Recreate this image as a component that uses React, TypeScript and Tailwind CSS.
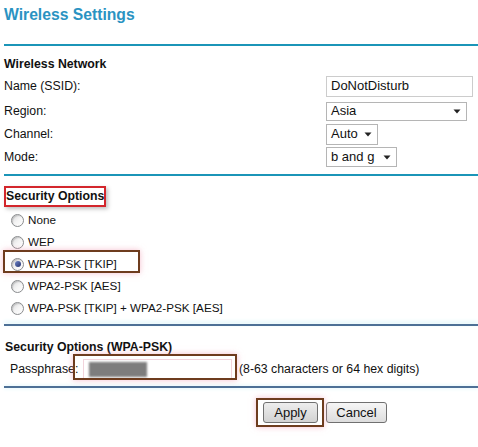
import React from "react";

function Radio({ checked }: { checked?: boolean }) {
  return (
    <span className="relative inline-flex h-[13px] w-[13px] shrink-0 items-center justify-center rounded-full border border-[#8a8c8e] bg-gradient-to-br from-[#d8d9da] via-[#f4f4f4] to-white shadow-[inset_1px_1px_1px_rgba(0,0,0,0.15)]">
      {checked && (
        <span className="h-[6px] w-[6px] rounded-full bg-gradient-to-br from-[#6f85c8] to-[#26346e]" />
      )}
    </span>
  );
}

function Arrow() {
  return (
    <svg width="8" height="5" viewBox="0 0 8 5" className="shrink-0">
      <path d="M0.5 0.5 L7.5 0.5 L4 4.5 Z" fill="#222" />
    </svg>
  );
}

function Select({ value, w, h }: { value: string; w: string; h: string }) {
  return (
    <div
      className={`${w} ${h} flex items-center justify-between border border-[#b5b5b5] bg-white pl-[4px] pr-[5px] text-[13px] text-[#111]`}
    >
      <span>{value}</span>
      <Arrow />
    </div>
  );
}

function Row({ label, children, className = "" }: { label: string; children: React.ReactNode; className?: string }) {
  return (
    <div className={`grid grid-cols-[326px_1fr] items-center h-[22px] ${className}`}>
      <span className="pl-[4px]">{label}</span>
      <div className="flex items-center">{children}</div>
    </div>
  );
}

function RadioRow({ label, checked, children }: { label: string; checked?: boolean; children?: React.ReactNode }) {
  return (
    <div className="relative flex h-[22px] items-center gap-[4px] pl-[11px] text-[11.7px]">
      <Radio checked={checked} />
      <span>{label}</span>
      {children}
    </div>
  );
}

export default function App() {
  return (
    <div className="relative h-[447px] w-[478px] overflow-hidden bg-white font-['Liberation_Sans',Arial,sans-serif] text-[12.3px] text-[#111]">
      <div className="h-[44px] pl-[4px] pt-[5px] text-[15.7px] font-bold leading-[20px] text-[#2a93c2]">
        Wireless Settings
      </div>
      <div className="ml-[4px] h-[2px] bg-[#1b95b8]" />

      <div className="mt-[8px] flex h-[21px] items-center pl-[4px] font-bold">Wireless Network</div>
      <Row label="Name (SSID):">
        <div className="flex h-[21px] w-[147px] items-center border border-[#cccccc] bg-white pl-[4px] text-[13px]">
          DoNotDisturb
        </div>
      </Row>
      <Row label="Region:" className="mt-[3px]">
        <Select value="Asia" w="w-[141px]" h="h-[19px]" />
      </Row>
      <Row label="Channel:" className="mt-[1px]">
        <Select value="Auto" w="w-[52px]" h="h-[21px]" />
      </Row>
      <Row label="Mode:" className="mt-[1px]">
        <Select value="b and g" w="w-[71px]" h="h-[20px]" />
      </Row>

      <div className="ml-[4px] mt-[6px] h-[2px] bg-[#1b95b8]" />

      <div className="relative mt-[9px] flex h-[22px] items-center pl-[6px] font-bold">
        Security Options
        <div className="absolute left-[4px] top-[1px] h-[21px] w-[102px] border-2 border-[#d3262c] shadow-[2px_2px_4px_rgba(0,0,0,0.25)]" />
      </div>

      <div className="mt-[2px]">
        <RadioRow label="None" />
        <RadioRow label="WEP" />
        <RadioRow label="WPA-PSK [TKIP]" checked>
          <div className="absolute left-[3px] top-[-3px] h-[23px] w-[137px] border-2 border-[#6e3c1e] shadow-[0_0_6px_rgba(240,150,175,0.6)]" />
        </RadioRow>
        <RadioRow label="WPA2-PSK [AES]" />
        <RadioRow label="WPA-PSK [TKIP] + WPA2-PSK [AES]" />
      </div>

      <div className="ml-[4px] mt-[5px] h-[2px] bg-[#4d7096] shadow-[0_-2px_4px_#cdeff7]" />

      <div className="mt-[10px] flex h-[22px] items-center pl-[5px] font-bold">Security Options (WPA-PSK)</div>
      <div className="relative flex h-[22px] items-center">
        <span className="w-[83px] pl-[10px]">Passphrase:</span>
        <div className="relative h-[20px] w-[149px] border border-[#f2d4dc] bg-white">
          <div className="absolute left-[5px] top-[2px] h-[15px] w-[58px] bg-[#7d7d7d] blur-[1px]" />
        </div>
        <span className="ml-[7px]">(8-63 characters or 64 hex digits)</span>
        <div className="absolute left-[73px] top-[-4px] h-[26px] w-[164px] border-2 border-[#6e3c1e] shadow-[0_0_6px_rgba(240,150,175,0.6)]" />
      </div>

      <div className="ml-[4px] mt-[6px] h-[2px] bg-[#4d7096] shadow-[0_0_4px_#cdeff7]" />

      <div className="mt-[14px] flex items-center gap-[8px] pl-[263px] text-[13px]">
        <div className="relative">
          <button className="flex h-[21px] w-[55px] items-center justify-center rounded-[3px] border border-[#707070] bg-gradient-to-b from-[#eeeeee] to-[#d2d2d2] text-[#111]">
            Apply
          </button>
          <div className="absolute left-[-7px] top-[-4px] h-[29px] w-[68px] border-2 border-[#6e3c1e] shadow-[0_0_6px_rgba(240,150,175,0.6)]" />
        </div>
        <button className="flex h-[21px] w-[61px] items-center justify-center rounded-[3px] border border-[#707070] bg-gradient-to-b from-[#f6f6f6] to-[#dddddd] text-[#111]">
          Cancel
        </button>
      </div>
    </div>
  );
}
